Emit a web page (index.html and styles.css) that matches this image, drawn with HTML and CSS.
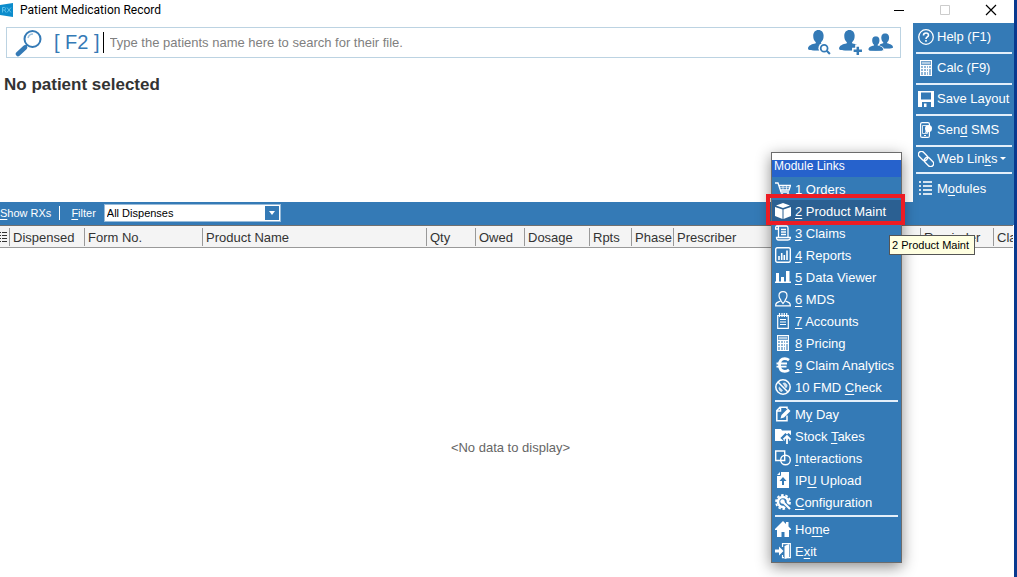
FILE: index.html
```html
<!DOCTYPE html>
<html lang="en">
<head>
<meta charset="utf-8">
<title>Patient Medication Record</title>
<link rel="stylesheet" href="styles.css">
</head>
<body>
<svg class="defs" aria-hidden="true">
  <symbol id="calc" viewBox="0 0 16 16"><path fill="currentColor" fill-rule="evenodd" d="M2 0h12v16H2zM3 1v4h10V1zM3 6v2h2V6zM6 6v2h2V6zM9 6v2h1V6zM11 6v2h2V6zM3 9v2h2V9zM6 9v2h2V9zM9 9v2h1V9zM11 9v6h2V9zM3 12v3h2v-3zM6 12v3h2v-3zM9 12v3h1v-3z"/><path fill="currentColor" d="M3 1h10v4H3z" opacity=".3"/><path fill="currentColor" d="M4 2h8v2H4zM3 6h10v9H3z" opacity=".45"/></symbol>
  <symbol id="person" viewBox="0 0 20 20"><path fill="currentColor" d="M10 0c3 0 5 2.200 5 5.500 0 3-1 5-2.500 6.200v1.100c4 1 7.500 2.200 7.500 5.200 0 1.500-4 2-10 2S0 19.500 0 18c0-3 3.500-4.200 7.500-5.200v-1.100C6 10.500 5 8.500 5 5.500 5 2.200 7 0 10 0z"/></symbol>
</svg>
<div class="window">
  <header class="titlebar">
    <svg class="logo" viewBox="0 0 14 14"><path fill="#0c8ccc" d="M0 2l13-2v14L0 12z"/><path d="M2.500 9.500V4.500h2q1 0 1 1.200T4.500 7h-2M4.500 7l1.500 2.500M7 4.500l4 5M11 4.500l-4 5" fill="none" stroke="#5dc0ea"/></svg>
    <h1 class="title">Patient Medication Record</h1>
    <div class="controls">
      <button aria-label="Minimise"><svg viewBox="0 0 12 12"><path d="M1 6.500h10" stroke="#000"/></svg></button>
      <button aria-label="Maximise" disabled><svg viewBox="0 0 12 12"><path d="M1.500 1.500h9v9h-9z" fill="none" stroke="#ccc"/></svg></button>
      <button aria-label="Close"><svg viewBox="0 0 12 12"><path d="M1 1l10 10M11 1L1 11" stroke="#000" stroke-width="1.200"/></svg></button>
    </div>
  </header>

  <div class="upper">
    <main class="patient">
      <div class="search">
        <svg class="lens" viewBox="0 0 28 28"><circle cx="17.500" cy="10" r="8" fill="#fff" stroke="#347ab6" stroke-width="2"/><path d="M13 9q1-4 5-4" fill="none" stroke="#9bc0de" stroke-width="1.500"/><path d="M12 16l-2.500 2.500" stroke="#347ab6" stroke-width="2"/><path d="M10 18.500L3 25" stroke="#347ab6" stroke-width="4.500" stroke-linecap="round"/></svg>
        <label class="key" for="patient">[ F2 ]</label>
        <input id="patient" class="query" type="text" placeholder="Type the patients name here to search for their file.">
        <div class="people">
          <button aria-label="Find patient"><svg viewBox="0 0 24 24"><use href="#person" x="0" y="0" width="20" height="20"/><circle cx="15.500" cy="17.500" r="5.500" fill="#fff"/><circle cx="15.500" cy="17.500" r="3.300" fill="#fff" stroke="currentColor" stroke-width="1.700"/><path d="M18 20l3 3" stroke="currentColor" stroke-width="2"/></svg></button>
          <button aria-label="Add patient"><svg viewBox="0 0 24 24"><use href="#person" x="1" y="0" width="20" height="20"/><path d="M19 14v10M13.500 19.500h10" stroke="#fff" stroke-width="5"/><path d="M19 16v8M15 20h8" stroke="currentColor" stroke-width="2.400"/></svg></button>
          <button aria-label="Patient groups"><svg viewBox="0 0 24 24"><use href="#person" x="9" y="3" width="15" height="15"/><use href="#person" x="0" y="6" width="15" height="15" stroke="#fff" stroke-width="3"/><use href="#person" x="0" y="6" width="15" height="14"/></svg></button>
        </div>
      </div>
      <h2 class="selected">No patient selected</h2>
    </main>
    <nav class="side">
      <button class="link"><svg viewBox="0 0 16 16"><circle cx="8" cy="8" r="7.300" fill="none" stroke="currentColor" stroke-width="1.300"/><path d="M5.500 6.500Q5.500 4 8 4t2.500 2.200C10.500 8 8 8 8 10" fill="none" stroke="currentColor" stroke-width="1.600"/><path d="M7.200 11h1.600v1.700H7.200z" fill="currentColor"/></svg>Help (F1)</button>
      <button class="link"><svg><use href="#calc"/></svg>Calc (F9)</button>
      <button class="link"><svg viewBox="0 0 16 16"><path fill="currentColor" fill-rule="evenodd" d="M0 0h16v16h-3v-5H4v5H0zM3 1.500v7h10v-7z"/><path fill="currentColor" d="M6 12.500h2.500V16H6z"/></svg>Save Layout</button>
      <button class="link"><svg viewBox="0 0 16 16"><rect x="2.600" y=".6" width="8.800" height="14.800" rx="1.500" fill="none" stroke="currentColor" stroke-width="1.200"/><path d="M4.500 3.500h5v8h-5z" fill="none" stroke="currentColor" stroke-width=".8"/><circle cx="10.500" cy="6.500" r="3.500" fill="currentColor"/><path d="M8 8l-1 3 4-1zM6 13h2v1H6z" fill="currentColor"/></svg><span>Sen<u>d</u> SMS</span></button>
      <button class="link"><svg viewBox="0 0 16 16"><g transform="rotate(45 8 8)" fill="none" stroke="currentColor" stroke-width="1.300"><rect x="-1.500" y="5" width="10.500" height="6" rx="3"/><rect x="7" y="5" width="10.500" height="6" rx="3"/></g></svg><span>Web Lin<u>k</u>s</span><i class="caret"></i></button>
      <button class="link"><svg viewBox="0 0 16 16"><path d="M1 2h2M1 6h2M1 10h2M1 14h2M5 2h9M5 6h9M5 10h9M5 14h9" stroke="currentColor" stroke-width="2" opacity=".8"/></svg><span>M<u>o</u>dules</span></button>
    </nav>
  </div>

  <div class="toolbar">
    <button class="tool"><u>S</u>how RXs</button>
    <label class="tool filter" for="filter"><u>F</u>ilter</label>
    <div class="picker"><select id="filter"><option>All Dispenses</option></select></div>
  </div>

  <section class="grid">
    <table>
      <colgroup><col class="w-mark"><col class="w-disp"><col class="w-form"><col class="w-product"><col class="w-short"><col class="w-short"><col class="w-dose"><col class="w-rpts"><col class="w-rpts"><col><col class="w-rem"><col class="w-last"></colgroup>
      <thead><tr>
        <th aria-label="Columns"><svg class="mark" viewBox="0 0 8 10"><path d="M0 .5h1M0 3.500h1M0 6.500h1M0 9.500h1M2 .5h5M2 3.500h5M2 6.500h5M2 9.500h5" stroke="#333"/></svg></th>
        <th>Dispensed</th><th>Form No.</th><th>Product Name</th><th>Qty</th><th>Owed</th><th>Dosage</th><th>Rpts</th><th>Phase</th><th>Prescriber</th><th>Reminder</th><th>Claim</th>
      </tr></thead>
    </table>
    <p class="empty">&lt;No data to display&gt;</p>
  </section>
</div>

<nav class="menu" aria-label="Module Links">
  <h3 class="menu-title">Module Links</h3>
  <button class="item"><svg viewBox="0 0 16 16"><path d="M0 2h3l3 9h8M4 4.500h11.500L14 9H5.500" fill="none" stroke="currentColor" stroke-width="1.300"/><path d="M5 6.700h10M8 4.500V9M11.500 4.500V9" fill="none" stroke="currentColor" stroke-width=".7"/><circle cx="7" cy="13.500" r="1.500" fill="currentColor"/><circle cx="13" cy="13.500" r="1.500" fill="currentColor"/></svg><span><u>1</u> Orders</span></button>
  <button class="item current"><svg viewBox="0 0 16 16"><path fill="currentColor" d="M8 0l7 2.500L8 5 1 2.500zM0 4l7.500 2.500V16L0 13zM16 4L8.500 6.500V16L16 13z"/></svg><span><u>2</u> Product Maint</span></button>
  <button class="item"><svg viewBox="0 0 16 16"><path d="M3.500 13V3Q3.500 1 2 1h9.500q1.500 0 1.500 2v9M2 1Q.5 1 .6 4h3M3 12.500h12.400q0 2.500-2.400 2.500H3.500q-2 0-2-2.500H3M6 4.500h5M6 7h5M6 9.500h5" fill="none" stroke="currentColor" stroke-width="1.300"/></svg><span><u>3</u> Claims</span></button>
  <button class="item"><svg viewBox="0 0 16 16"><rect x=".7" y=".7" width="14.600" height="14.600" rx="1.500" fill="none" stroke="currentColor" stroke-width="1.400"/><path d="M4 13V9M6.700 13V6M9.300 13V8M12 13V3.500" stroke="currentColor" stroke-width="1.600"/></svg><span><u>4</u> Reports</span></button>
  <button class="item"><svg viewBox="0 0 16 16"><path fill="currentColor" d="M0 12.500h16V14H0zM1 4h3v9H1zM6 8h3v5H6zM11 2h3.500v11H11z"/></svg><span><u>5</u> Data Viewer</span></button>
  <button class="item"><svg viewBox="0 0 16 16"><path d="M8 .7c2.600 0 4 1.800 4 4S10.500 8.500 10 9.500c.3 1.500 5.300 1 5.300 4.500v.8H.7V14c0-3.500 5-3 5.300-4.500C5.500 8.500 4 7 4 4.700s1.400-4 4-4zM6 10l2 2.500L10 10" fill="none" stroke="currentColor" stroke-width="1.200"/></svg><span><u>6</u> MDS</span></button>
  <button class="item"><svg viewBox="0 0 16 16"><path d="M2.700 2.500h10.600v12.800H2.700zM5 6.500h6M5 9h6M5 11.500h6M4.500 0v4M7 0v4M9.300 0v4M11.700 0v4" fill="none" stroke="currentColor" stroke-width="1.200"/></svg><span><u>7</u> Accounts</span></button>
  <button class="item"><svg><use href="#calc"/></svg><span><u>8</u> Pricing</span></button>
  <button class="item"><svg viewBox="0 0 16 16"><path d="M14 3.200Q12 1.700 9.800 1.700C6 1.700 4.500 4.500 4.500 8s1.500 6.300 5.300 6.300q2.200 0 4.200-1.500" fill="none" stroke="currentColor" stroke-width="2.800"/><path d="M1.500 6.500H12M1.500 9.700h10" stroke="currentColor" stroke-width="1.800"/></svg><span><u>9</u> Claim Analytics</span></button>
  <button class="item"><svg viewBox="0 0 16 16"><circle cx="8" cy="8" r="7.200" fill="none" stroke="currentColor" stroke-width="1.500"/><path d="M3 3l10 10" stroke="currentColor" stroke-width="1.500"/><path d="M7.500 4l2.500-.5 2.500 2.500-.5 2.500-1.500.5zM4 7.500l4 4-1.500 1.500q-2.500-1-3-3.500z" fill="currentColor" opacity=".8"/></svg><span>10 FMD <u>C</u>heck</span></button>
  <hr>
  <button class="item"><svg viewBox="0 0 16 16"><path d="M12 9.500v5.300H1.800V4.500L5 1.200h7V3M2 5h3.500V1.500" fill="none" stroke="currentColor" stroke-width="1.500"/><path d="M5.500 12.500l1-3.500L13 2.500 15.500 5 9 11.500z" fill="currentColor"/></svg><span>M<u>y</u> Day</span></button>
  <button class="item"><svg viewBox="0 0 16 16"><path fill="currentColor" d="M0 1h6l1 1.500h9V13H0z"/><path d="M12 6.500L7 11.500M12 6.500l5 5M12 8v9" fill="none" stroke="#347ab6" stroke-width="4.500"/><path d="M8.500 11.500L12 8l3.500 3.500M12 8.500V16" fill="none" stroke="currentColor" stroke-width="1.800"/></svg><span>Stock <u>T</u>akes</span></button>
  <button class="item"><svg viewBox="0 0 16 16"><path d="M.7 1h9v9.500h-9z" fill="none" stroke="currentColor" stroke-width="1.400"/><circle cx="10.500" cy="10" r="4.800" fill="none" stroke="currentColor" stroke-width="1.400"/></svg><span><u>I</u>nteractions</span></button>
  <button class="item"><svg viewBox="0 0 16 16"><path fill="currentColor" fill-rule="evenodd" d="M5 0h9v16H2V3zM8 5L4.500 9H7v4h2V9h2.500z"/><path d="M2 3.500h3.500V0" fill="none" stroke="#347ab6"/></svg><span>IP<u>U</u> Upload</span></button>
  <button class="item"><svg viewBox="0 0 16 16"><circle cx="8" cy="8" r="5" fill="none" stroke="currentColor" stroke-width="2.600"/><circle cx="8" cy="8" r="7" fill="none" stroke="currentColor" stroke-width="1.800" stroke-dasharray="2.600 1.798"/><path d="M7.500 7.500l7 7" stroke="#347ab6" stroke-width="4"/><path d="M7 7l8 8" stroke="currentColor" stroke-width="2.200"/><circle cx="7.500" cy="7.500" r="2.200" fill="currentColor"/></svg><span><u>C</u>onfiguration</span></button>
  <hr>
  <button class="item"><svg viewBox="0 0 16 16"><path fill="currentColor" d="M8 0l3 3V1h2.500v4.500L16 8v1h-2v7H9.500v-5h-3v5H2V9H0V8z"/></svg><span>Ho<u>m</u>e</span></button>
  <button class="item"><svg viewBox="0 0 16 16"><path fill="currentColor" d="M0 6.500h4V3.500L8.500 8 4 12.500v-3H0zM9.500 3L14 1v14l-4.500 1z"/><path d="M7.500 4V.7h7.800v14H13M7.500 12v2.700H9" fill="none" stroke="currentColor" stroke-width="1.200"/></svg><span>E<u>x</u>it</span></button>
</nav>
<div class="highlight"></div>
<div class="tooltip" role="tooltip">2 Product Maint</div>
</body>
</html>
```
FILE: styles.css
```css
* { box-sizing: border-box; }

body {
  margin: 0;
  font-family: "Liberation Sans", Arial, sans-serif;
  font-size: 13px;
  background: #fff;
  overflow: hidden;
}

button, input, select {
  font: inherit;
  color: inherit;
  border: 0;
  margin: 0;
  padding: 0;
  background: none;
  outline: 0;
}

svg { display: block; flex: none; }
u { text-underline-offset: 2px; }
.defs { position: absolute; width: 0; height: 0; }

.window {
  display: flex;
  flex-direction: column;
  min-height: 100vh;
  border-right: 3px solid #08398f;
}

.titlebar {
  display: flex;
  align-items: center;
  height: 20px;
  gap: 6px;
}
.logo { width: 14px; height: 14px; }
.title {
  flex: 1;
  margin: 0;
  font: 12px Roboto, "Noto Sans", sans-serif;
  color: #000;
}
.controls { display: flex; gap: 34px; padding-right: 17px; }
.controls svg { width: 12px; height: 12px; }

.upper { display: flex; }
.patient { flex: 1; padding: 7px 12px 0 4px; }
.search {
  display: flex;
  align-items: center;
  height: 31px;
  margin-left: 2px;
  padding: 0 7px 0 8px;
  border: 1px solid #bcd3e2;
  color: #347ab6;
}
.lens { width: 28px; height: 28px; }
.key {
  margin-left: 11px;
  padding-right: 3px;
  font-size: 20px;
  border-right: 1px solid #000;
  line-height: 21px;
}
.query { flex: 1; margin-left: 6px; }
.query::placeholder { color: #808080; opacity: 1; }
.people { display: flex; gap: 5px; }
.people svg { width: 25px; height: 25px; }
.selected {
  margin: 17px 0 0;
  font-size: 17px;
  line-height: 20px;
  color: #333;
}

.side {
  width: 101px;
  margin-top: 3px;
  padding: 0 2px 0 3px;
  background: #347ab6;
  color: #fff;
}
.link {
  display: flex;
  align-items: center;
  width: 100%;
  height: 31px;
  padding: 0 0 2px 2px;
  gap: 3px;
  border-bottom: 2px solid #e4effa;
  white-space: nowrap;
}
.link:nth-child(5) { height: 27px; }
.link:nth-child(6) { height: 28px; border: 0; padding-bottom: 0; }
.link svg, .item svg { width: 16px; height: 16px; }
.caret {
  border: 3px solid transparent;
  border-top-color: #fff;
  border-bottom: 0;
}

.toolbar {
  display: flex;
  align-items: center;
  height: 23px;
  padding-bottom: 1px;
  background: #347ab6;
  color: #fff;
  font-size: 11px;
}
.tool { line-height: 14px; padding-right: 8px; }
.filter {
  padding: 0 8px 0 11px;
  border-left: 1px solid #fff;
}
.picker {
  position: relative;
  width: 177px;
  height: 18px;
  border: 1px solid #98bbd9;
  background: #fff;
}
.picker select {
  width: 100%;
  height: 16px;
  padding-left: 2px;
  appearance: none;
  color: #000;
}
.picker::before {
  content: "";
  position: absolute;
  right: 1px;
  top: 1px;
  width: 14px;
  height: 14px;
  background: #347ab6;
  pointer-events: none;
}
.picker::after {
  content: "";
  position: absolute;
  right: 5px;
  top: 6px;
  border: 3px solid transparent;
  border-top: 4px solid #fff;
  border-bottom: 0;
  pointer-events: none;
}

.grid { border-top: 1px solid #707070; margin-right: 1px; }
table {
  width: 100%;
  table-layout: fixed;
  border-collapse: separate;
  border-spacing: 0;
}
thead { background: #f4f4f4; }
th {
  height: 22px;
  padding: 2px 0 0 3px;
  border-bottom: 1px solid #999;
  background: linear-gradient(#999, #999) right center / 1px 18px no-repeat;
  font-weight: normal;
  text-align: left;
  color: #333;
  white-space: nowrap;
  overflow: hidden;
}
th:first-child { padding: 0; }
th:last-child { background: none; }
.mark { width: 8px; height: 10px; }
.w-mark { width: 10px; }
.w-disp { width: 75px; }
.w-form { width: 118px; }
.w-product { width: 224px; }
.w-short { width: 49px; }
.w-dose { width: 65px; }
.w-rpts { width: 42px; }
.w-rem { width: 73px; }
.w-last { width: 19px; }
.empty {
  margin: 191px 0 0;
  padding-left: 8px;
  line-height: 18px;
  text-align: center;
  color: #666;
}

/* Floating module menu with its marker and tooltip */
.menu {
  position: absolute;
  left: 771px;
  top: 152px;
  width: 131px;
  border: 1px solid #6c6c6c;
  background: #347ab6;
  color: #fff;
  box-shadow: 0 4px 14px rgba(0, 0, 0, .45);
}
.menu-title {
  margin: 0;
  height: 25px;
  padding-left: 2px;
  border-top: 7px solid #fff;
  background: linear-gradient(#2662cc 0 17px, #347ab6 17px);
  font-size: 12px;
  font-weight: normal;
  line-height: 12px;
}
.item {
  display: flex;
  align-items: center;
  width: 100%;
  height: 22px;
  padding-left: 3px;
  gap: 4px;
  white-space: nowrap;
}
.current { background: #2b6092; }
.menu hr {
  height: 2px;
  margin: 2px 3px 1px;
  border: 0;
  background: #e4effa;
}
.highlight {
  position: absolute;
  left: 766px;
  top: 194px;
  width: 139px;
  height: 31px;
  border: 4px solid #ec1c24;
  pointer-events: none;
}
.tooltip {
  position: absolute;
  left: 889px;
  top: 235px;
  padding: 2px 5px 2px 2px;
  border: 1px solid #555;
  background: #ffffe1;
  color: #000;
  font-size: 11px;
  line-height: 14px;
}
```
